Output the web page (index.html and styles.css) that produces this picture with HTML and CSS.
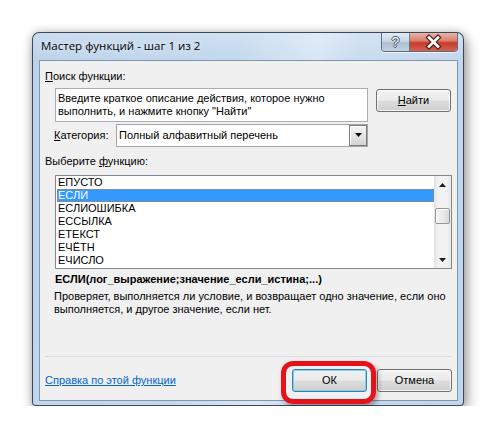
FILE: index.html
```html
<!DOCTYPE html>
<html lang="ru">
<head>
<meta charset="utf-8">
<title>Мастер функций</title>
<link rel="stylesheet" href="styles.css">
</head>
<body>
<div class="desk">
  <div class="window">
    <div class="titlebar">
      <span class="title">Мастер функций - шаг 1 из 2</span>
      <div class="caption-btns">
        <span class="cbtn help"><span class="qmark">?</span></span>
        <span class="cbtn close">
          <svg width="47" height="18" viewBox="0 0 47 18">
            <path d="M19 4.5 L28 13.5 M28 4.5 L19 13.5" stroke="#4a2420" stroke-width="5" stroke-linecap="square" fill="none"/>
            <path d="M19 4.5 L28 13.5 M28 4.5 L19 13.5" stroke="#ffffff" stroke-width="2.6" stroke-linecap="square" fill="none"/>
          </svg>
        </span>
      </div>
    </div>
    <div class="client">
      <div class="lbl first"><u>П</u>оиск функции:</div>
      <div class="search-row">
        <div class="search-box">Введите краткое описание действия, которое нужно<br>выполнить, и нажмите кнопку "Найти"</div>
        <span class="btn find"><u>Н</u>айти</span>
      </div>
      <div class="cat-row">
        <span class="cat-lbl"><u>К</u>атегория:</span>
        <div class="combo">
          <span class="combo-text">Полный алфавитный перечень</span>
          <span class="combo-btn">
            <svg width="7" height="4" viewBox="0 0 7 4"><path d="M0 0 H7 L3.5 4 Z" fill="#000"/></svg>
          </span>
        </div>
      </div>
      <div class="lbl choose">Выберите <u>ф</u>ункцию:</div>
      <div class="listbox">
        <ul class="items">
          <li>ЕПУСТО</li>
          <li class="sel">ЕСЛИ</li>
          <li>ЕСЛИОШИБКА</li>
          <li>ЕССЫЛКА</li>
          <li>ЕТЕКСТ</li>
          <li>ЕЧЁТН</li>
          <li>ЕЧИСЛО</li>
        </ul>
        <div class="vscroll">
          <span class="arr"><svg width="7" height="4" viewBox="0 0 7 4"><path d="M3.5 0 L7 4 H0 Z" fill="#1e1e1e"/></svg></span>
          <span class="track"><span class="thumb"></span></span>
          <span class="arr"><svg width="7" height="4" viewBox="0 0 7 4"><path d="M0 0 H7 L3.5 4 Z" fill="#1e1e1e"/></svg></span>
        </div>
      </div>
      <div class="sig">ЕСЛИ(лог_выражение;значение_если_истина;...)</div>
      <div class="desc">Проверяет, выполняется ли условие, и возвращает одно значение, если оно<br>выполняется, и другое значение, если нет.</div>
      <div class="sep"></div>
      <div class="bottom-row">
        <a class="help-link" href="#">Справка по этой функции</a>
        <div class="btns">
          <span class="ok-wrap">
            <span class="btn default">ОК</span>
            <span class="ring"></span>
          </span>
          <span class="btn">Отмена</span>
        </div>
      </div>
    </div>
  </div>
</div>
</body>
</html>
```

FILE: styles.css
```css
html, body {
  margin: 0;
  background: #ffffff;
}

body {
  font-family: "Liberation Sans", Arial, sans-serif;
  font-size: 11px;
  line-height: 13px;
  color: #000;
}

.desk {
  padding: 32px 0 0 32px;
}

.window {
  width: 430px;
  height: 372px;
  border: 1px solid rgba(25, 35, 50, 0.8);
  border-radius: 7px 7px 4px 4px;
  background:
    linear-gradient(to bottom, rgba(255,255,255,0.2), rgba(255,255,255,0) 26px),
    linear-gradient(100deg, #bdd3eb 0%, #c4d9ee 42%, #d9e7f6 58%, #cadcf0 66%, #bfd5ec 100%);
  box-shadow:
    0 0 8px rgba(0, 0, 0, 0.22),
    3px 6px 14px rgba(0, 0, 0, 0.35);
  display: flex;
  flex-direction: column;
}

.titlebar {
  height: 27px;
  flex: none;
  display: flex;
  justify-content: space-between;
  align-items: flex-start;
  padding: 0 5px 0 8px;
}

.title {
  font-family: "Open Sans", "Noto Sans", sans-serif;
  font-size: 11.5px;
  line-height: 16px;
  margin-top: 5px;
  color: #000;
  text-shadow: 0 0 6px rgba(255,255,255,0.9);
}

.caption-btns {
  display: flex;
  height: 18px;
  border: 1px solid rgba(40, 50, 65, 0.65);
  border-top: none;
  border-radius: 0 0 4px 4px;
  overflow: hidden;
  box-shadow: 0 1px 0 rgba(255,255,255,0.6);
}

.cbtn {
  height: 18px;
  display: flex;
  align-items: center;
  justify-content: center;
}

.help {
  width: 27px;
  background: linear-gradient(to bottom, #e2ebf4 0%, #c9d6e4 45%, #aebfd2 55%, #c2d2e2 100%);
  border-right: 1px solid rgba(40, 50, 65, 0.55);
}

.qmark {
  font-family: "Liberation Sans", Arial, sans-serif;
  font-size: 14px;
  line-height: 14px;
  color: #fff;
  text-shadow: 1px 0 0 #44505f, -1px 0 0 #44505f, 0 1px 0 #44505f, 0 -1px 0 #44505f;
}

.close {
  width: 47px;
  background: linear-gradient(to bottom, #eab3a9 0%, #dc806f 42%, #c53b2a 55%, #d6634f 100%);
}

.client {
  margin-left: 6px;
  width: 419px;
  height: 341px;
  box-sizing: border-box;
  border: 1px solid #8396ad;
  background: #f0f0f0;
  padding: 0 5px;
}

.lbl.first {
  margin-top: 9px;
}

.search-row {
  display: flex;
  align-items: flex-start;
  margin-top: 5px;
  padding-left: 10px;
}

.search-box {
  width: 313px;
  height: 34px;
  box-sizing: border-box;
  border: 1px solid #abadb3;
  background: #fff;
  padding: 3px 2px;
  white-space: nowrap;
}

.btn {
  width: 75px;
  height: 23px;
  box-sizing: border-box;
  display: flex;
  align-items: center;
  justify-content: center;
  border: 1px solid #707070;
  border-radius: 3px;
  background: linear-gradient(to bottom, #f2f2f2 0%, #ebebeb 48%, #dddddd 52%, #cfcfcf 100%);
  box-shadow: inset 0 0 0 1px rgba(255,255,255,0.75);
  color: #000;
}

.btn.find {
  margin-left: 8px;
  margin-top: 1px;
}

.btn.default {
  border-color: #3c7fb1;
  background: linear-gradient(to bottom, #f2f2f2 0%, #ebebeb 48%, #dddddd 52%, #cfcfcf 100%);
  box-shadow: inset 0 0 0 1px #7cd1f7;
}

.cat-row {
  display: flex;
  align-items: center;
  margin-top: 2px;
  padding-left: 9px;
}

.cat-lbl {
  width: 62px;
}

.combo {
  width: 252px;
  height: 23px;
  box-sizing: border-box;
  border: 1px solid #a5a5a5;
  background: #fff;
  display: flex;
  align-items: center;
  justify-content: space-between;
}

.combo-text {
  padding-left: 2px;
}

.combo-btn {
  width: 18px;
  height: 21px;
  box-sizing: border-box;
  border: 1px solid #7b7b7b;
  background: linear-gradient(to bottom, #f4f4f4 0%, #e6e6e6 50%, #d3d3d3 100%);
  box-shadow: inset 1px 1px 0 #ffffff;
  display: flex;
  align-items: center;
  justify-content: center;
  padding-bottom: 2px;
}

.lbl.choose {
  margin-top: 8px;
}

.listbox {
  margin: 7px 0 0 10px;
  width: 397px;
  height: 94px;
  box-sizing: border-box;
  border: 1px solid #828790;
  background: #fff;
  display: flex;
}

.items {
  list-style: none;
  margin: 0;
  padding: 0;
  flex: 1;
}

.items li {
  height: 13px;
  padding-left: 2px;
}

.items li.sel {
  background: #3399ff;
  color: #fff;
  margin-left: 1px;
  padding-left: 1px;
  outline: 1px dotted #c8822f;
  outline-offset: -1px;
}

.vscroll {
  width: 17px;
  display: flex;
  flex-direction: column;
  background: linear-gradient(to right, #e3e3e3 0%, #f2f2f2 25%, #f2f2f2 75%, #e8e8e8 100%);
}

.arr {
  height: 17px;
  display: flex;
  align-items: center;
  justify-content: center;
}

.track {
  flex: 1;
  display: flex;
  flex-direction: column;
  align-items: center;
}

.thumb {
  margin-top: 15px;
  width: 15px;
  height: 16px;
  box-sizing: border-box;
  border: 1px solid #979797;
  border-radius: 2px;
  background: linear-gradient(to right, #f4f4f4 0%, #eaeaea 50%, #d8d8d8 100%);
  box-shadow: inset 1px 1px 0 #ffffff;
}

.sig {
  margin-top: 4px;
  padding-left: 10px;
  font-weight: bold;
}

.desc {
  margin-top: 4px;
  padding-left: 9px;
  white-space: nowrap;
}

.sep {
  margin-top: 40px;
  height: 1px;
  background: #d6dde4;
}

.bottom-row {
  display: flex;
  align-items: center;
  justify-content: space-between;
  margin-top: 12px;
}

.help-link {
  color: #0066cc;
  text-decoration: underline;
}

.btns {
  display: flex;
  gap: 10px;
}

.ok-wrap {
  position: relative;
  display: flex;
}

.ring {
  position: absolute;
  left: -11px;
  top: -8px;
  width: 95px;
  height: 43px;
  box-sizing: border-box;
  border: 5px solid #e5121c;
  border-radius: 12px;
  box-shadow: 2px 3px 5px rgba(0, 0, 0, 0.35);
}
```
